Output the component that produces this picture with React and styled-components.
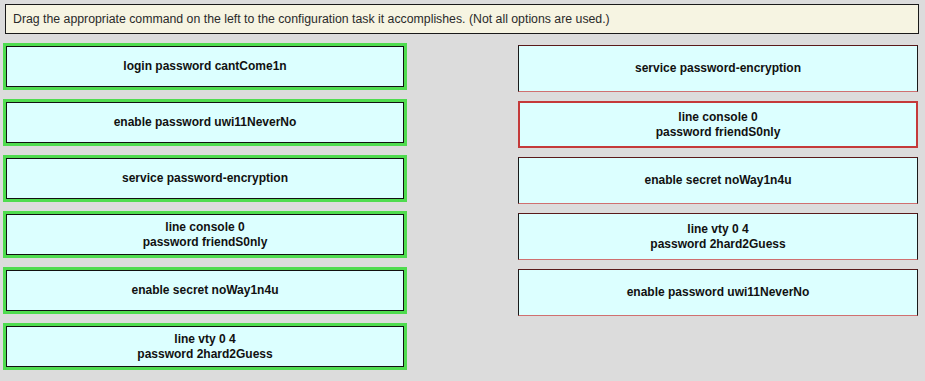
import React from 'react';
import styled, { createGlobalStyle } from 'styled-components';

const GlobalStyle = createGlobalStyle`
  html, body {
    margin: 0;
    padding: 0;
    background: #dcdcdc;
    font-family: "Liberation Sans", Arial, sans-serif;
  }
`;

const Page = styled.div`
  width: 925px;
  height: 381px;
  box-sizing: border-box;
  padding: 4px 6px 0 3px;
  background: #dcdcdc;
`;

const Instructions = styled.div`
  margin-left: 2px;
  height: 30px;
  box-sizing: border-box;
  border: 1px solid #1a1a1a;
  background: #f6f4e2;
  color: #2a2a2a;
  font-size: 12.3px;
  display: flex;
  align-items: center;
  padding-left: 7px;
`;

const Board = styled.div`
  display: grid;
  grid-template-columns: 404px 400px;
  column-gap: 111px;
  margin-top: 9px;
`;

const Column = styled.div`
  display: flex;
  flex-direction: column;
  gap: 9px;
  padding-top: ${({ $offset }) => $offset || 0}px;
`;

const Tile = styled.div`
  height: 47px;
  box-sizing: border-box;
  background: #dcffff;
  display: flex;
  flex-direction: column;
  align-items: center;
  justify-content: center;
  font-size: 12px;
  font-weight: bold;
  line-height: 15px;
  color: #111;
  text-align: center;
`;

const Command = styled(Tile)`
  border: 3px solid #4fdc4f;
  box-shadow: inset 1px 1px 0 #111, inset -1px -1px 0 #111;
`;

const Task = styled(Tile)`
  border: ${({ $red }) => ($red ? '2px solid #c43a3a' : '1px solid #1a1a1a')};
  border-top-color: ${({ $red }) => ($red ? '#c43a3a' : '#5a1a1a')};
  border-bottom-color: ${({ $red }) => ($red ? '#c43a3a' : '#d07070')};
`;

const commands = [
  ['login password cantCome1n'],
  ['enable password uwi11NeverNo'],
  ['service password-encryption'],
  ['line console 0', 'password friendS0nly'],
  ['enable secret noWay1n4u'],
  ['line vty 0 4', 'password 2hard2Guess'],
];

const tasks = [
  { lines: ['service password-encryption'] },
  { lines: ['line console 0', 'password friendS0nly'], red: true },
  { lines: ['enable secret noWay1n4u'] },
  { lines: ['line vty 0 4', 'password 2hard2Guess'] },
  { lines: ['enable password uwi11NeverNo'] },
];

const App = () => (
  <>
    <GlobalStyle />
    <Page>
      <Instructions>
        Drag the appropriate command on the left to the configuration task it accomplishes. (Not all options are used.)
      </Instructions>
      <Board>
        <Column>
          {commands.map((lines, i) => (
            <Command key={i}>
              {lines.map((l) => (
                <span key={l}>{l}</span>
              ))}
            </Command>
          ))}
        </Column>
        <Column $offset={2}>
          {tasks.map((t, i) => (
            <Task key={i} $red={t.red}>
              {t.lines.map((l) => (
                <span key={l}>{l}</span>
              ))}
            </Task>
          ))}
        </Column>
      </Board>
    </Page>
  </>
);

export default App;
